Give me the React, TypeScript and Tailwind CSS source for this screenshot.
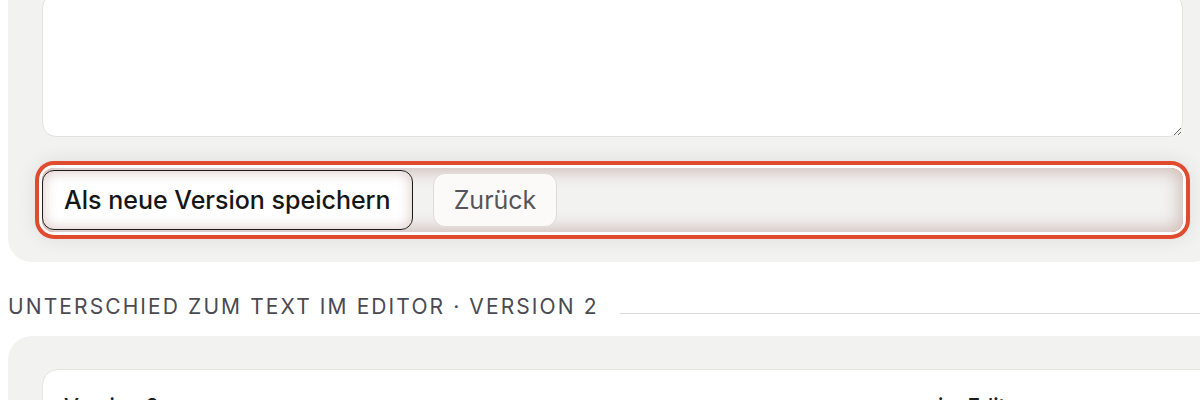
import React from 'react';

const font = { fontFamily: 'Inter, "Noto Sans", sans-serif' };

export default function App() {
  return (
    <div className="w-[1200px] h-[400px] overflow-hidden bg-white" style={font}>
      <div className="w-[1217px] pl-2">
        {/* editor card */}
        <div className="-mt-[40px] rounded-[24px] bg-[#f2f2f0] px-[34px] pt-[34px] pb-[30px]">
          <textarea
            className="block w-full h-[143px] rounded-[14px] border border-[#e2e2de] bg-white resize-y outline-none"
            defaultValue=""
          />
          <div className="mt-[31px] flex items-center gap-[20px] py-[2px] rounded-[12px] shadow-[0_0_0_3px_#ffffff,0_0_0_7px_#e04a2e,0_0_18px_9px_rgba(0,0,0,0.07),inset_0_0_16px_4px_rgba(140,80,70,0.32)]">
            <button className="h-[60px] px-[21px] rounded-[12px] border border-[#1c1c1c] bg-white text-[25px] leading-none font-medium text-[#161616] shadow-[inset_0_0_12px_2px_rgba(150,90,80,0.28)]">
              Als neue Version speichern
            </button>
            <button className="h-[54px] px-[20px] rounded-[12px] border border-[#dedbd8] bg-[#fbfaf9] text-[25px] leading-none text-[#55555b]">
              Zurück
            </button>
          </div>
        </div>

        {/* section heading */}
        <div className="mt-[29px] flex items-baseline gap-[21px]">
          <h2 className="text-[21px] leading-[32px] tracking-[0.1em] text-[#4a4a52] whitespace-nowrap">
            UNTERSCHIED ZUM TEXT IM EDITOR · VERSION 2
          </h2>
          <div className="flex-1 h-px bg-[#d9d9d5]" />
        </div>
      </div>

      {/* diff card */}
      <div className="w-[1260px] pl-2">
        <div className="mt-[13px] rounded-t-[24px] bg-[#f2f2f0] px-[34px] pt-[33px]">
          <div className="rounded-t-[16px] border border-[#e4e4e0] bg-white px-[21px] pt-[22px] pb-10">
            <div className="flex text-[21px] leading-[30px] font-medium text-[#1c1c1c]">
              <div className="w-[874px]">Version 2</div>
              <div>im Editor</div>
            </div>
          </div>
        </div>
      </div>
    </div>
  );
}
